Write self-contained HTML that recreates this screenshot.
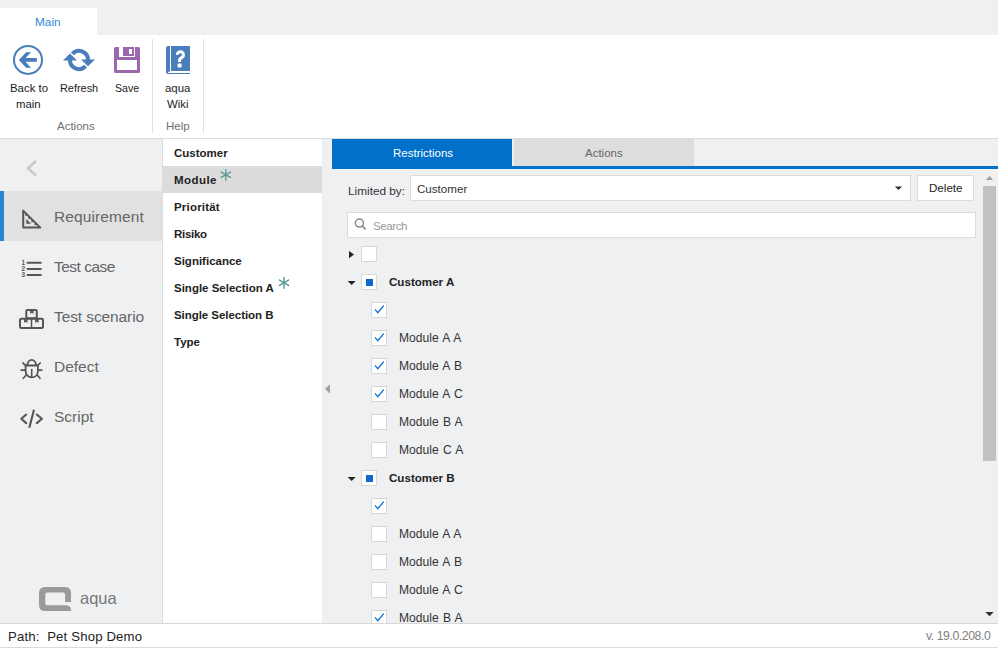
<!DOCTYPE html>
<html><head><meta charset="utf-8">
<style>
*{margin:0;padding:0;box-sizing:border-box}
html,body{width:998px;height:648px;overflow:hidden;background:#fff;font-family:"Liberation Sans",sans-serif;color:#222}
.a{position:absolute}
.t{position:absolute;line-height:1;white-space:nowrap}
svg.full{position:absolute;left:0;top:0;width:998px;height:648px;overflow:visible}
</style></head><body>
<div class="a" style="left:0px;top:0px;width:998px;height:35px;background:#eff0f2;"></div>
<div class="a" style="left:0px;top:8px;width:97px;height:27px;background:#fff;"></div>
<div class="t" style="left:35px;top:17px;font-size:11.8px;color:#2f86d6;">Main</div>
<div class="a" style="left:0px;top:35px;width:998px;height:103px;background:#fff;"></div>
<div class="a" style="left:0px;top:138px;width:998px;height:1px;background:#dcdcdc;"></div>
<div class="a" style="left:152px;top:39px;width:1px;height:94px;background:#e0e0e0;"></div>
<div class="a" style="left:203px;top:39px;width:1px;height:94px;background:#e0e0e0;"></div>
<div class="t" style="left:10px;top:83px;font-size:11.4px;color:#222;">Back to</div>
<div class="t" style="left:16px;top:99px;font-size:11.4px;color:#222;">main</div>
<div class="t" style="left:60px;top:83px;font-size:10.9px;color:#222;">Refresh</div>
<div class="t" style="left:115px;top:83px;font-size:10.6px;color:#222;">Save</div>
<div class="t" style="left:165px;top:83px;font-size:11.4px;color:#222;">aqua</div>
<div class="t" style="left:167px;top:99px;font-size:11.4px;color:#222;">Wiki</div>
<div class="t" style="left:57px;top:121px;font-size:11.5px;color:#707070;">Actions</div>
<div class="t" style="left:166px;top:121px;font-size:11.5px;color:#707070;">Help</div>
<div class="a" style="left:0px;top:139px;width:162px;height:484px;background:#eff0f2;"></div>
<div class="a" style="left:162px;top:139px;width:1px;height:484px;background:#dcdcdc;"></div>
<div class="a" style="left:0px;top:191px;width:162px;height:50px;background:#e1e1e1;"></div>
<div class="a" style="left:0px;top:191px;width:4px;height:50px;background:#2a84d2;"></div>
<div class="t" style="left:54px;top:209px;font-size:15.5px;color:#666;letter-spacing:0.1px;">Requirement</div>
<div class="t" style="left:54px;top:259px;font-size:15.5px;color:#666;letter-spacing:-0.5px;">Test case</div>
<div class="t" style="left:54px;top:309px;font-size:15.5px;color:#666;letter-spacing:-0.1px;">Test scenario</div>
<div class="t" style="left:54px;top:359px;font-size:15.5px;color:#666;">Defect</div>
<div class="t" style="left:54px;top:409px;font-size:15.5px;color:#666;">Script</div>
<div class="t" style="left:80px;top:590px;font-size:16.5px;color:#777;">aqua</div>
<div class="a" style="left:163px;top:139px;width:159px;height:484px;background:#fff;"></div>
<div class="a" style="left:163px;top:166px;width:159px;height:27px;background:#dcdcdc;"></div>
<div class="t" style="left:174px;top:148px;font-size:11.5px;color:#222;font-weight:bold;">Customer</div>
<div class="t" style="left:174px;top:175px;font-size:11.5px;color:#222;font-weight:bold;letter-spacing:0.45px;">Module</div>
<div class="t" style="left:174px;top:202px;font-size:11.5px;color:#222;font-weight:bold;letter-spacing:0.2px;">Priorität</div>
<div class="t" style="left:174px;top:229px;font-size:11.5px;color:#222;font-weight:bold;letter-spacing:-0.3px;">Risiko</div>
<div class="t" style="left:174px;top:256px;font-size:11.5px;color:#222;font-weight:bold;">Significance</div>
<div class="t" style="left:174px;top:283px;font-size:11.5px;color:#222;font-weight:bold;">Single Selection A</div>
<div class="t" style="left:174px;top:310px;font-size:11.5px;color:#222;font-weight:bold;letter-spacing:-0.05px;">Single Selection B</div>
<div class="t" style="left:174px;top:337px;font-size:11.5px;color:#222;font-weight:bold;">Type</div>
<div class="a" style="left:322px;top:139px;width:676px;height:484px;background:#eff0f2;"></div>
<div class="a" style="left:981px;top:169px;width:17px;height:454px;background:#f0f0f0;"></div>
<div class="a" style="left:983px;top:186px;width:13px;height:275px;background:#c1c1c1;"></div>
<div class="a" style="left:332px;top:139px;width:180px;height:27px;background:#0070c8;"></div>
<div class="a" style="left:514px;top:139px;width:180px;height:27px;background:#dedede;"></div>
<div class="a" style="left:332px;top:166px;width:666px;height:3px;background:#0070c8;"></div>
<div class="t" style="left:393px;top:148px;font-size:11.5px;color:#fff;">Restrictions</div>
<div class="t" style="left:585px;top:148px;font-size:11.5px;color:#666;">Actions</div>
<div class="t" style="left:348px;top:186px;font-size:11.8px;color:#333;">Limited by:</div>
<div class="a" style="left:410px;top:175px;width:501px;height:26px;background:#fff;border:1px solid #dcdcdc"></div>
<div class="t" style="left:417px;top:183px;font-size:11.6px;color:#333;">Customer</div>
<div class="a" style="left:917px;top:175px;width:57px;height:26px;background:#fff;border:1px solid #dcdcdc"></div>
<div class="t" style="left:929px;top:182px;font-size:11.6px;color:#222;">Delete</div>
<div class="a" style="left:347px;top:212px;width:629px;height:26px;background:#fff;border:1px solid #dcdcdc"></div>
<div class="t" style="left:373px;top:220px;font-size:11.6px;color:#999;letter-spacing:-0.45px;">Search</div>
<div class="a" style="left:0;top:0;width:998px;height:623px;overflow:hidden">
<div class="a" style="left:361px;top:246px;width:16px;height:16px;background:#fff;border:1px solid #d9d9d9"></div>
<div class="a" style="left:361px;top:274px;width:16px;height:16px;background:#fff;border:1px solid #d9d9d9"></div>
<div class="a" style="left:366px;top:279px;width:7px;height:7px;background:#0a6acd;"></div>
<div class="t" style="left:389px;top:276px;font-size:11.6px;color:#222;font-weight:bold;">Customer A</div>
<div class="a" style="left:371px;top:302px;width:16px;height:16px;background:#fff;border:1px solid #d9d9d9"></div>
<div class="a" style="left:371px;top:330px;width:16px;height:16px;background:#fff;border:1px solid #d9d9d9"></div>
<div class="t" style="left:399px;top:332px;font-size:12.1px;color:#333;word-spacing:0.9px;">Module A A</div>
<div class="a" style="left:371px;top:358px;width:16px;height:16px;background:#fff;border:1px solid #d9d9d9"></div>
<div class="t" style="left:399px;top:360px;font-size:12.1px;color:#333;word-spacing:0.9px;">Module A B</div>
<div class="a" style="left:371px;top:386px;width:16px;height:16px;background:#fff;border:1px solid #d9d9d9"></div>
<div class="t" style="left:399px;top:388px;font-size:12.1px;color:#333;word-spacing:0.9px;">Module A C</div>
<div class="a" style="left:371px;top:414px;width:16px;height:16px;background:#fff;border:1px solid #d9d9d9"></div>
<div class="t" style="left:399px;top:416px;font-size:12.1px;color:#333;word-spacing:0.9px;">Module B A</div>
<div class="a" style="left:371px;top:442px;width:16px;height:16px;background:#fff;border:1px solid #d9d9d9"></div>
<div class="t" style="left:399px;top:444px;font-size:12.1px;color:#333;word-spacing:0.9px;">Module C A</div>
<div class="a" style="left:361px;top:470px;width:16px;height:16px;background:#fff;border:1px solid #d9d9d9"></div>
<div class="a" style="left:366px;top:475px;width:7px;height:7px;background:#0a6acd;"></div>
<div class="t" style="left:389px;top:472px;font-size:11.6px;color:#222;font-weight:bold;">Customer B</div>
<div class="a" style="left:371px;top:498px;width:16px;height:16px;background:#fff;border:1px solid #d9d9d9"></div>
<div class="a" style="left:371px;top:526px;width:16px;height:16px;background:#fff;border:1px solid #d9d9d9"></div>
<div class="t" style="left:399px;top:528px;font-size:12.1px;color:#333;word-spacing:0.9px;">Module A A</div>
<div class="a" style="left:371px;top:554px;width:16px;height:16px;background:#fff;border:1px solid #d9d9d9"></div>
<div class="t" style="left:399px;top:556px;font-size:12.1px;color:#333;word-spacing:0.9px;">Module A B</div>
<div class="a" style="left:371px;top:582px;width:16px;height:16px;background:#fff;border:1px solid #d9d9d9"></div>
<div class="t" style="left:399px;top:584px;font-size:12.1px;color:#333;word-spacing:0.9px;">Module A C</div>
<div class="a" style="left:371px;top:610px;width:16px;height:16px;background:#fff;border:1px solid #d9d9d9"></div>
<div class="t" style="left:399px;top:612px;font-size:12.1px;color:#333;word-spacing:0.9px;">Module B A</div>
</div>
<div class="a" style="left:0px;top:623px;width:998px;height:1px;background:#d8d8d8;"></div>
<div class="a" style="left:0px;top:624px;width:998px;height:23px;background:#fff;"></div>
<div class="a" style="left:0px;top:647px;width:998px;height:1px;background:#dadada;"></div>
<div class="t" style="left:8px;top:630px;font-size:13.2px;color:#222;letter-spacing:0.15px;">Path:&nbsp; Pet Shop Demo</div>
<div class="t" style="left:926px;top:630px;font-size:12.3px;color:#808080;letter-spacing:-0.45px;">v. 19.0.208.0</div>
<svg class="full" viewBox="0 0 998 648">
<circle cx="28" cy="59.9" r="14" fill="none" stroke="#4a7ebb" stroke-width="2"/>
<path d="M18.9 59.9 L26.1 52.2 L31.1 52.2 L25.5 58.1 L36.9 58.1 L36.9 61.7 L25.5 61.7 L31.1 67.7 L26.1 67.7 Z" fill="#4a7ebb"/>
<path d="M72.42 53.86 A9 9 0 0 1 88.00 60.50" fill="none" stroke="#4a7ebb" stroke-width="4"/>
<path d="M70.00 59.50 A9 9 0 0 0 85.58 66.14" fill="none" stroke="#4a7ebb" stroke-width="4"/>
<path d="M63 60.5 L77 60.5 L70 53.6 Z" fill="#4a7ebb"/>
<path d="M81 59.4 L95 59.4 L88 66.3 Z" fill="#4a7ebb"/>
<path fill-rule="evenodd" fill="#9b68ad" d="M115.5 47 H138.5 Q140 47 140 48.5 V71.5 Q140 73 138.5 73 H115.5 Q114 73 114 71.5 V48.5 Q114 47 115.5 47 Z M119 47 V57 H135 V47 Z M117 60 V70 H137 V60 Z"/>
<path fill-rule="evenodd" fill="#9b68ad" d="M123 47 H134 V56 H123 Z M129 49 V54 H132 V49 Z"/>
<path fill="#4a7ebb" d="M168 46 H170 V71.2 Q168 71.4 168 73 H190 V74 H168 Q166 74 166 72 V48 Q166 46 168 46 Z"/>
<rect x="171" y="46" width="19" height="25" fill="#4a7ebb"/>
<path d="M177.25 54.9 A3.1 3.1 0 1 1 182.3 57.2 Q179.6 58.6 179.6 60.3 L179.6 61.9" fill="none" stroke="#fff" stroke-width="3"/>
<circle cx="179.6" cy="65.55" r="2.25" fill="#fff"/>
<path d="M36 161 L28 168.3 L36 175.6" fill="none" stroke="#c8c8c8" stroke-width="2.6"/>
<path d="M23.2 210.6 L23.2 227.6 L40.3 227.6 Z" fill="none" stroke="#555" stroke-width="2" stroke-linejoin="round"/>
<path d="M26.4 219 L26.4 223.8 L31 223.8 Z" fill="#555"/>
<rect x="25" y="213.6" width="2" height="2" fill="#555"/>
<rect x="28.4" y="216.9" width="2" height="2" fill="#555"/>
<rect x="31.299999999999997" y="220.1" width="2" height="2" fill="#555"/>
<rect x="34.6" y="223.1" width="2" height="2" fill="#555"/>
<line x1="27.5" y1="262.7" x2="40.8" y2="262.7" stroke="#555" stroke-width="2" stroke-linecap="round"/>
<line x1="27.5" y1="268.9" x2="40.8" y2="268.9" stroke="#555" stroke-width="2" stroke-linecap="round"/>
<line x1="27.5" y1="275.1" x2="40.8" y2="275.1" stroke="#555" stroke-width="2" stroke-linecap="round"/>
<text x="23.2" y="265.2" font-size="6.4" font-weight="bold" text-anchor="middle" fill="#555" font-family="Liberation Sans">1</text>
<text x="23.2" y="271.3" font-size="6.4" font-weight="bold" text-anchor="middle" fill="#555" font-family="Liberation Sans">2</text>
<text x="23.2" y="277.4" font-size="6.4" font-weight="bold" text-anchor="middle" fill="#555" font-family="Liberation Sans">3</text>
<rect x="26.3" y="309.9" width="10.5" height="8.3" rx="1.2" fill="none" stroke="#555" stroke-width="2"/>
<rect x="20" y="318.7" width="23" height="9.2" rx="1.2" fill="none" stroke="#555" stroke-width="2"/>
<line x1="31.5" y1="318.7" x2="31.5" y2="328" stroke="#555" stroke-width="1.5"/>
<path d="M30.1 309.5 H33.5 V314.1 L31.8 312.7 L30.1 314.1 Z" fill="#555"/>
<path d="M24.1 318.5 H27.5 V323.1 L25.8 321.7 L24.1 323.1 Z" fill="#555"/>
<path d="M35.2 318.5 H38.6 V323.1 L36.900000000000006 321.7 L35.2 323.1 Z" fill="#555"/>
<path d="M27.3 365.5 A4.4 5.6 0 0 1 36.1 365.5" fill="none" stroke="#555" stroke-width="1.8"/>
<path d="M25.6 365.5 H37.9 V371 C37.9 375 35 377.4 31.7 377.4 C28.4 377.4 25.6 375 25.6 371 Z" fill="none" stroke="#555" stroke-width="1.8" stroke-linejoin="round"/>
<line x1="31.7" y1="368.9" x2="31.7" y2="377" stroke="#555" stroke-width="1.6"/>
<line x1="22.9" y1="363" x2="25.8" y2="365.6" stroke="#555" stroke-width="1.7" stroke-linecap="round"/>
<line x1="40.2" y1="363" x2="37.6" y2="365.6" stroke="#555" stroke-width="1.7" stroke-linecap="round"/>
<line x1="21.1" y1="370.1" x2="25" y2="370.1" stroke="#555" stroke-width="1.7" stroke-linecap="round"/>
<line x1="38.5" y1="370.1" x2="41.8" y2="370.1" stroke="#555" stroke-width="1.7" stroke-linecap="round"/>
<line x1="26" y1="375.3" x2="23.3" y2="378.3" stroke="#555" stroke-width="1.7" stroke-linecap="round"/>
<line x1="37.4" y1="375.3" x2="40" y2="378.3" stroke="#555" stroke-width="1.7" stroke-linecap="round"/>
<path d="M26.2 414.5 L21.3 418.8 L26.2 423.1" fill="none" stroke="#555" stroke-width="2.1" stroke-linecap="round" stroke-linejoin="round"/>
<path d="M36.8 414.5 L41.9 418.8 L36.8 423.1" fill="none" stroke="#555" stroke-width="2.1" stroke-linecap="round" stroke-linejoin="round"/>
<line x1="34" y1="409.8" x2="29.3" y2="427.7" stroke="#555" stroke-width="2.1" stroke-linecap="butt"/>
<path fill="#9a9a9a" fill-rule="evenodd" d="M45 587 H65 Q71 587 71 593 V602 H65.1 V594.6 Q65.1 592.6 63.1 592.6 H47.3 Q45.3 592.6 45.3 594.6 V603.2 Q45.3 605.2 47.3 605.2 H65 Q71 605.2 71 610 V611 H45 Q39 611 39 605 V593 Q39 587 45 587 Z"/>
<line x1="225.8" y1="168.9" x2="225.8" y2="180.70000000000002" stroke="#6aa4a4" stroke-width="1.6"/>
<line x1="221.21" y1="172.15" x2="230.39" y2="177.45" stroke="#5e9a9a" stroke-width="1.5" stroke-linecap="round"/>
<line x1="221.21" y1="177.45" x2="230.39" y2="172.15" stroke="#5e9a9a" stroke-width="1.5" stroke-linecap="round"/>
<line x1="284" y1="276.90000000000003" x2="284" y2="288.7" stroke="#6aa4a4" stroke-width="1.6"/>
<line x1="279.41" y1="280.15" x2="288.59" y2="285.45" stroke="#5e9a9a" stroke-width="1.5" stroke-linecap="round"/>
<line x1="279.41" y1="285.45" x2="288.59" y2="280.15" stroke="#5e9a9a" stroke-width="1.5" stroke-linecap="round"/>
<path d="M325 389 L330 384.2 L330 393.8 Z" fill="#a0a0a0"/>
<path d="M894.8 186.5 L902.2 186.5 L898.5 190 Z" fill="#333"/>
<circle cx="359.4" cy="223.1" r="4" fill="none" stroke="#8a8a8a" stroke-width="1.5"/>
<line x1="362.3" y1="226" x2="365.5" y2="229.4" stroke="#8a8a8a" stroke-width="1.7"/>
<path d="M985.8 180 L993.2 180 L989.5 176 Z" fill="#a0a0a0"/>
<path d="M985.3 612 L993.7 612 L989.5 616.2 Z" fill="#333"/>
<g clip-path="url(#clipTree)">
<clipPath id="clipTree"><rect x="0" y="0" width="998" height="623"/></clipPath>
<path d="M349 251 L354 254.6 L349 258.3 Z" fill="#222"/>
<path d="M347.6 281 L355.7 281 L351.65 285 Z" fill="#222"/>
<path d="M375 309.4 L377.8 312.6 L383.8 305.6" fill="none" stroke="#1470d0" stroke-width="1.4"/>
<path d="M375 337.4 L377.8 340.6 L383.8 333.6" fill="none" stroke="#1470d0" stroke-width="1.4"/>
<path d="M375 365.4 L377.8 368.6 L383.8 361.6" fill="none" stroke="#1470d0" stroke-width="1.4"/>
<path d="M375 393.4 L377.8 396.6 L383.8 389.6" fill="none" stroke="#1470d0" stroke-width="1.4"/>
<path d="M347.6 477 L355.7 477 L351.65 481 Z" fill="#222"/>
<path d="M375 505.4 L377.8 508.6 L383.8 501.6" fill="none" stroke="#1470d0" stroke-width="1.4"/>
<path d="M375 617.4 L377.8 620.6 L383.8 613.6" fill="none" stroke="#1470d0" stroke-width="1.4"/>
</g>
</svg>
</body></html>
